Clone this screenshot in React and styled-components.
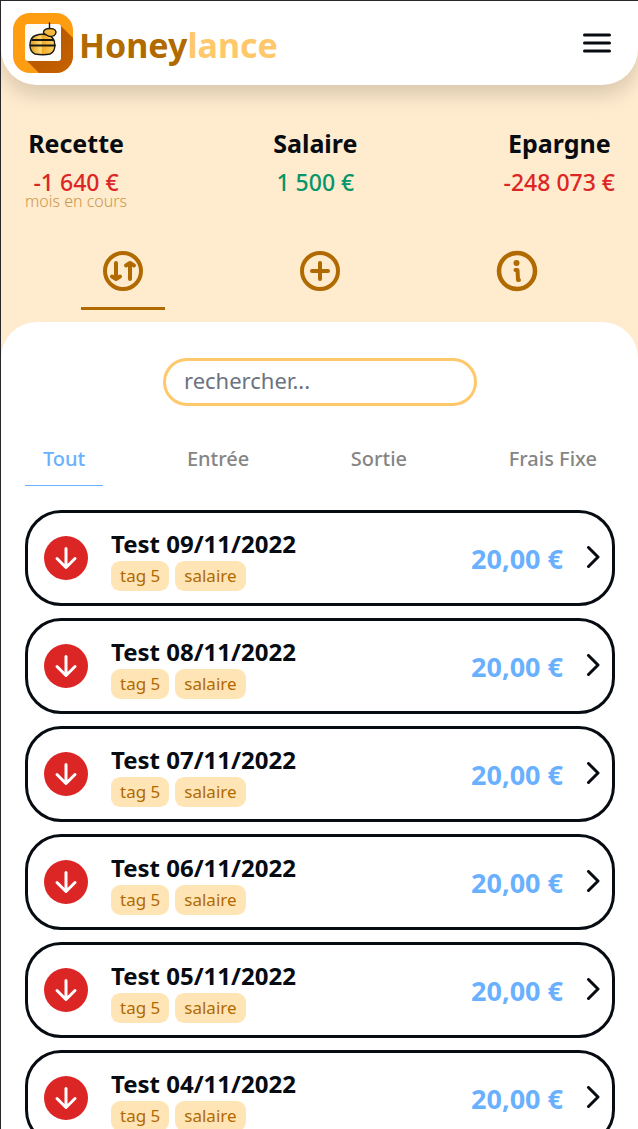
import React, { useState } from "react";
import styled, { createGlobalStyle, ThemeProvider } from "styled-components";

const theme = {
  ink: "#070b12",
  honey: "#b06a00",
  honeyLight: "#ffc86b",
  cream: "#ffebcd",
  tag: "#ffe4b5",
  blue: "#69b1ff",
  red: "#dc2626",
  green: "#059669",
  muted: "#858585",
};

const GlobalStyle = createGlobalStyle`
  *, *::before, *::after { box-sizing: border-box; }
  body {
    margin: 0;
    font-family: "Noto Sans", "Open Sans", sans-serif;
    color: ${theme.ink};
  }
  h1, h2, h3, p, dl, dd, ul { margin: 0; padding: 0; }
  button, input { font: inherit; color: inherit; }
`;

const Page = styled.div`
  display: flex;
  flex-direction: column;
  height: 100vh;
  overflow: hidden;
  background: ${(p) => p.theme.cream};
  border: solid #28282c;
  border-width: 1px 0 0 1px;
`;

const Header = styled.header`
  flex: none;
  display: flex;
  align-items: center;
  justify-content: space-between;
  height: 84px;
  padding: 0 23px 0 12px;
  background: #fff;
  border-radius: 0 0 36px 36px;
  box-shadow: 0 10px 20px rgba(0, 0, 0, 0.15);
`;

const Brand = styled.a`
  display: flex;
  align-items: center;
  gap: 6px;
  color: ${(p) => p.theme.honey};
  font-size: 34px;
  font-weight: 700;
  line-height: 48px;
  text-decoration: none;
`;

const BrandName = styled.span`
  padding-top: 4px;
`;

const BrandLight = styled.span`
  color: ${(p) => p.theme.honeyLight};
`;

const IconButton = styled.button`
  display: flex;
  padding: 0;
  border: 0;
  background: none;
  cursor: pointer;
`;

const Summary = styled.dl`
  flex: none;
  display: flex;
  justify-content: space-between;
  padding: 40px 23px 0 24px;
  text-align: center;
`;

const SummaryItem = styled.div`
  height: 86px;
`;

const SummaryLabel = styled.dt`
  font-size: 25px;
  font-weight: 700;
  line-height: 36px;
`;

const SummaryValue = styled.dd`
  padding-top: 9px;
  color: ${(p) => p.theme[p.$tone]};
  font-size: 23px;
  font-weight: 500;
  line-height: 24px;
`;

const SummaryNote = styled.dd`
  color: ${(p) => p.theme.honey};
  font-size: 16px;
  font-weight: 300;
  line-height: 14px;
  opacity: 0.65;
`;

const Nav = styled.nav`
  flex: none;
  display: flex;
  padding: 28px 23px 12px 24px;
`;

const NavSlot = styled.div`
  flex: 1;
  display: flex;
  justify-content: center;
`;

const NavButton = styled.button`
  display: flex;
  padding: 8px 18px 12px;
  border: 0;
  border-bottom: 3px solid ${(p) => (p.$active ? p.theme.honey : "transparent")};
  background: none;
  color: ${(p) => p.theme.honey};
  cursor: pointer;
`;

const Panel = styled.main`
  flex: 1;
  min-height: 0;
  overflow-y: auto;
  scrollbar-width: none;
  padding: 36px 23px 0 24px;
  background: #fff;
  border-radius: 36px 36px 0 0;
`;

const Search = styled.input`
  display: block;
  width: 314px;
  max-width: 100%;
  height: 48px;
  margin: 0 auto;
  padding: 0 18px 4px;
  border: 3px solid ${(p) => p.theme.honeyLight};
  border-radius: 24px;
  background: #fff;
  font-size: 22px;
  outline: 0;

  &::placeholder {
    color: #6b7280;
    opacity: 1;
  }
`;

const Filters = styled.div`
  display: flex;
  justify-content: space-between;
  margin-top: 26px;
`;

const FilterTab = styled.button`
  height: 54px;
  padding: 0 18px;
  border: 0;
  border-bottom: 1px solid ${(p) => (p.$active ? p.theme.blue : "transparent")};
  background: none;
  color: ${(p) => (p.$active ? p.theme.blue : p.theme.muted)};
  font-size: 20px;
  font-weight: 500;
  cursor: pointer;
`;

const List = styled.ul`
  display: grid;
  gap: 12px;
  margin-top: 24px;
  padding-bottom: 24px;
  list-style: none;
`;

const Card = styled.li`
  display: flex;
  align-items: center;
  height: 96px;
  padding: 0 8px 0 16px;
  border: 3px solid ${(p) => p.theme.ink};
  border-radius: 36px;
`;

const Direction = styled.span`
  flex: none;
  display: grid;
  place-items: center;
  width: 44px;
  height: 44px;
  border-radius: 50%;
  background: ${(p) => p.theme.red};
  color: #fff;
`;

const Details = styled.div`
  flex: 1;
  min-width: 0;
  margin-left: 23px;
`;

const Title = styled.h3`
  padding-top: 2px;
  font-size: 24px;
  font-weight: 700;
  line-height: 34px;
`;

const Tags = styled.div`
  display: flex;
  gap: 6px;
`;

const Tag = styled.span`
  padding: 0 9px;
  border-radius: 9px;
  background: ${(p) => p.theme.tag};
  color: ${(p) => p.theme.honey};
  font-size: 17px;
  line-height: 30px;
`;

const Amount = styled.span`
  margin-right: 17px;
  padding-top: 2px;
  color: ${(p) => p.theme.blue};
  font-size: 27px;
  font-weight: 700;
  line-height: 36px;
`;

function Logo() {
  return (
    <svg width="60" height="60" viewBox="0 0 60 60" aria-hidden="true">
      <defs>
        <clipPath id="logo-tile"><rect width="60" height="60" rx="17" /></clipPath>
        <linearGradient id="logo-shade" x1="0" y1="0" x2="1" y2="1">
          <stop offset="0.3" stopColor="#b95800" />
          <stop offset="1" stopColor="#cf6a00" />
        </linearGradient>
        <linearGradient id="logo-hive" x1="0" x2="1">
          <stop offset="0" stopColor="#e09a1c" />
          <stop offset="0.45" stopColor="#ffdc72" />
          <stop offset="0.5" stopColor="#f5a92a" />
          <stop offset="1" stopColor="#ffd263" />
        </linearGradient>
      </defs>
      <g clipPath="url(#logo-tile)">
        <rect width="60" height="60" fill="#ff9d12" />
        <path d="M47 12 L78 43 V78 H44 L13 47Z" fill="url(#logo-shade)" />
        <rect x="12" y="11" width="36" height="37" rx="3" fill="#fdfcf8" />
        <g stroke="#1d1a12" strokeWidth="1.4" strokeLinecap="round">
          <path d="M22 41C15 38 15.500 25 22.500 22.500Q29.500 20 36 22.500C43 25 44 38 37 41Q30 42.500 22 41Z" fill="url(#logo-hive)" />
          <path d="M19 27H40.500M17.500 32.500H42" fill="none" strokeWidth="1.8" />
          <path d="M30.500 20C30 17 33 15.500 37 15.500C42 15.500 44 18 42.500 21C41 24 36 24 33.500 22L30.500 20Z" fill="#f7b93b" />
          <path d="M36.500 10V15.500" fill="none" />
        </g>
      </g>
    </svg>
  );
}

function StrokeIcon({ size, width, children }) {
  return (
    <svg
      width={size}
      height={size}
      viewBox={`0 0 ${size} ${size}`}
      fill="none"
      stroke="currentColor"
      strokeWidth={width}
      strokeLinecap="round"
      strokeLinejoin="round"
      aria-hidden="true"
    >
      {children}
    </svg>
  );
}

const MenuIcon = () => (
  <StrokeIcon size={36} width={3}>
    <path d="M5.500 10H30.500M5.500 18H30.500M5.500 26H30.500" />
  </StrokeIcon>
);

const TransferIcon = () => (
  <StrokeIcon size={48} width={4}>
    <circle cx="24" cy="24" r="18" />
    <path d="M17 16V31.500M13 29.500L17 32L21 29.500M31 32V16.500M27 18.500L31 16L35 18.500" />
  </StrokeIcon>
);

const AddIcon = () => (
  <StrokeIcon size={48} width={4}>
    <circle cx="24" cy="24" r="18" />
    <path d="M16 24H32M24 16V32" />
  </StrokeIcon>
);

const InfoIcon = () => (
  <StrokeIcon size={48} width={4}>
    <circle cx="24" cy="24" r="18" strokeWidth="4.500" />
    <path d="M22.500 23H24.500L25 33H26" />
    <circle cx="23.500" cy="16" r="3" fill="currentColor" stroke="none" />
  </StrokeIcon>
);

const ArrowDownIcon = () => (
  <StrokeIcon size={32} width={3}>
    <path d="M16 6.500V25M7 16.500L16 25.500L25 16.500" />
  </StrokeIcon>
);

const ChevronIcon = () => (
  <StrokeIcon size={24} width={3}>
    <path d="M8.500 1.500L18 11L8.500 20.500" />
  </StrokeIcon>
);

const summary = [
  { label: "Recette", value: "-1 640 €", tone: "red", note: "mois en cours" },
  { label: "Salaire", value: "1 500 €", tone: "green" },
  { label: "Epargne", value: "-248 073 €", tone: "red" },
];

const sections = [
  { name: "Mouvements", Icon: TransferIcon },
  { name: "Ajouter", Icon: AddIcon },
  { name: "Informations", Icon: InfoIcon },
];

const filters = ["Tout", "Entrée", "Sortie", "Frais Fixe"];

const entries = ["09", "08", "07", "06", "05", "04"].map((day) => ({
  title: `Test ${day}/11/2022`,
  tags: ["tag 5", "salaire"],
  amount: "20,00 €",
}));

export default function App() {
  const [section, setSection] = useState("Mouvements");
  const [filter, setFilter] = useState("Tout");

  return (
    <ThemeProvider theme={theme}>
      <GlobalStyle />
      <Page>
        <Header>
          <Brand href="#">
            <Logo />
            <BrandName>Honey<BrandLight>lance</BrandLight></BrandName>
          </Brand>
          <IconButton type="button" aria-label="Menu"><MenuIcon /></IconButton>
        </Header>

        <Summary>
          {summary.map((s) => (
            <SummaryItem key={s.label}>
              <SummaryLabel>{s.label}</SummaryLabel>
              <SummaryValue $tone={s.tone}>{s.value}</SummaryValue>
              {s.note && <SummaryNote>{s.note}</SummaryNote>}
            </SummaryItem>
          ))}
        </Summary>

        <Nav>
          {sections.map(({ name, Icon }) => (
            <NavSlot key={name}>
              <NavButton
                type="button"
                aria-label={name}
                $active={section === name}
                onClick={() => setSection(name)}
              >
                <Icon />
              </NavButton>
            </NavSlot>
          ))}
        </Nav>

        <Panel>
          <Search type="search" aria-label="Rechercher" placeholder="rechercher..." />
          <Filters>
            {filters.map((name) => (
              <FilterTab
                key={name}
                type="button"
                $active={filter === name}
                onClick={() => setFilter(name)}
              >
                {name}
              </FilterTab>
            ))}
          </Filters>
          <List>
            {entries.map((entry) => (
              <Card key={entry.title}>
                <Direction><ArrowDownIcon /></Direction>
                <Details>
                  <Title>{entry.title}</Title>
                  <Tags>{entry.tags.map((tag) => <Tag key={tag}>{tag}</Tag>)}</Tags>
                </Details>
                <Amount>{entry.amount}</Amount>
                <IconButton type="button" aria-label={`Ouvrir ${entry.title}`}>
                  <ChevronIcon />
                </IconButton>
              </Card>
            ))}
          </List>
        </Panel>
      </Page>
    </ThemeProvider>
  );
}
